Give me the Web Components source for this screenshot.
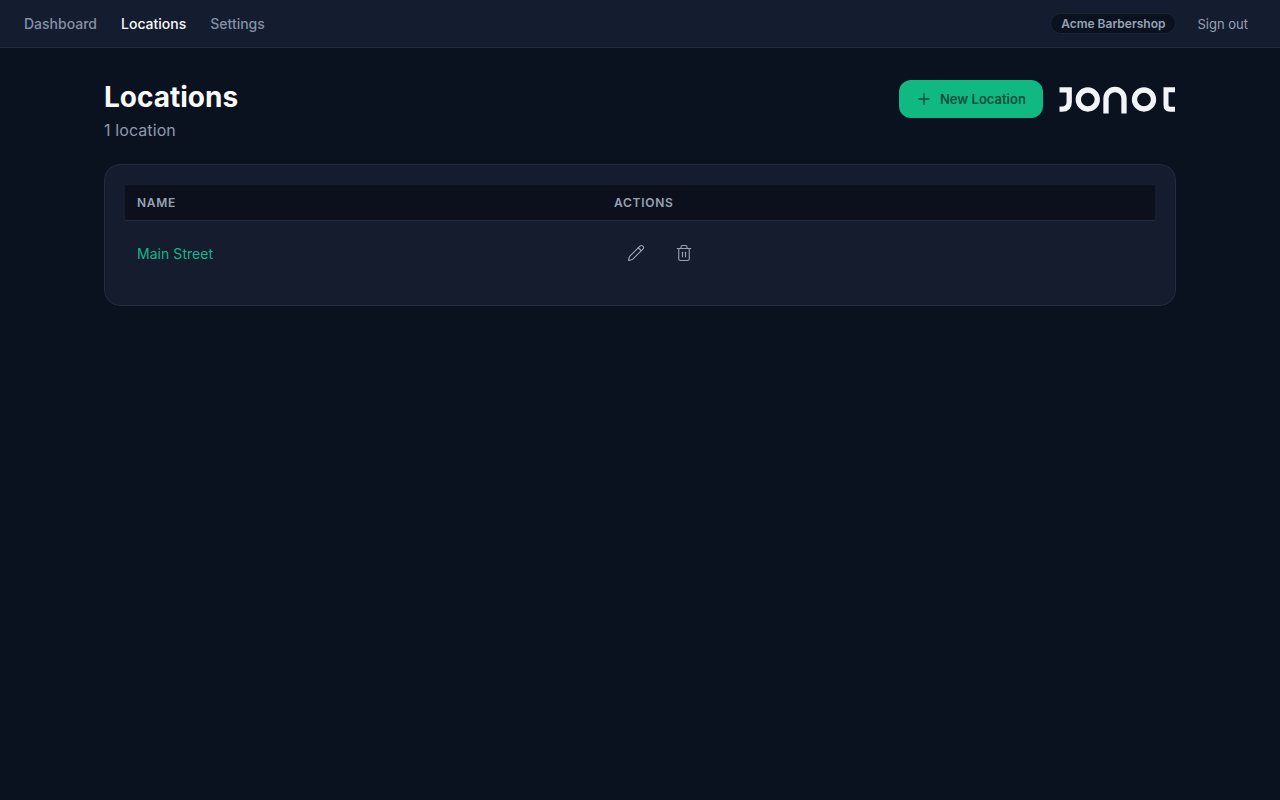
<!DOCTYPE html>
<html lang="en"><head><meta charset="utf-8"><title>Locations</title>
<style>
html,body{margin:0;padding:0;background:#0a1220;height:100%}
body{font-family:Inter,"Liberation Sans",sans-serif;color:#f1f5f9}
</style></head><body>
<app-nav></app-nav>
<page-main>
  <page-head title="Locations" sub="1 location">
    <new-button>New Location</new-button>
    <brand-logo></brand-logo>
  </page-head>
  <location-table></location-table>
</page-main>
<script>
function def(name,html,setup){
  customElements.define(name,class extends HTMLElement{
    constructor(){super();this.attachShadow({mode:'open'}).innerHTML=html;}
    connectedCallback(){if(setup)setup(this);}
  });
}
def('app-nav',`<style>
:host{display:flex;box-sizing:border-box;height:48px;align-items:center;justify-content:space-between;padding:0 32px 0 24px;background:#141c2f;border-bottom:1px solid #232c3e;font-size:14px;font-weight:500;color:#8491a5}
nav{display:flex;gap:24px}
a{color:inherit;text-decoration:none}
a.on{color:#f8fafc}
.r{display:flex;align-items:center;gap:21px}
.pill{box-sizing:border-box;height:21px;display:flex;align-items:center;padding:0 10px;border-radius:11px;background:#0a1220;border:1px solid #1c2536;font-size:12px;font-weight:600;color:#98a2b3}
.out{color:#98a2b3;font-weight:400;font-size:13px}
</style><nav><a href="#">Dashboard</a><a href="#" class="on">Locations</a><a href="#">Settings</a></nav>
<div class="r"><span class="pill">Acme Barbershop</span><a href="#" class="out">Sign out</a></div>`);
def('page-main',`<style>:host{display:block;width:1072px;margin:0 auto;padding-top:32px}</style><slot></slot>`);
def('page-head',`<style>
:host{display:flex;justify-content:space-between;align-items:flex-start;margin-bottom:22px}
h1{margin:0;font-size:28px;line-height:34px;font-weight:700;color:#f8fafc}
p{margin:4px 0 0;font-size:16px;line-height:24px;letter-spacing:.1px;color:#8e9aad}
.a{display:flex;align-items:center;gap:16px}
</style><div><h1></h1><p></p></div><div class="a"><slot></slot></div>`,el=>{
  el.shadowRoot.querySelector('h1').textContent=el.getAttribute('title');
  el.shadowRoot.querySelector('p').textContent=el.getAttribute('sub');
});
def('new-button',`<style>
:host{display:flex;box-sizing:border-box;height:38px;width:144px;align-items:center;gap:9px;padding-left:18px;border-radius:12px;background:#10b981;color:#064e3b;font-size:13px;font-weight:600}
svg{width:14px;height:14px;flex:none}
</style><svg viewBox="0 0 14 14" fill="none" stroke="#064e3b" stroke-width="1.4" stroke-linecap="round"><path d="M7 1.800v10.400M1.800 7h10.400"/></svg><slot></slot>`);
def('brand-logo',`<style>:host{display:block;width:117px;height:38px}svg{display:block}</style>
<svg width="117" height="38" viewBox="0 0 117 38" fill="none" stroke="#f1f5f9" stroke-width="5.300">
<path d="M0.500 9.900H10.200V22Q10.200 29.100 3 29.100H0.500"/>
<circle cx="28.800" cy="19.500" r="9.500"/>
<path d="M47 33.500V18.500A9 9 0 0 1 65 18.500V33.500"/>
<circle cx="85" cy="19.500" r="9.500"/>
<path d="M116 9.700H107V25Q107 29.300 111 29.300H116" stroke-width="5"/>
</svg>`);
const pencil=`<svg viewBox="0 0 24 24" fill="none" stroke="currentColor" stroke-width="1.500" stroke-linecap="round" stroke-linejoin="round"><path d="M21.174 6.812a1 1 0 0 0-3.986-3.987L3.842 16.174a2 2 0 0 0-.5.83l-1.321 4.352a.5.5 0 0 0 .623.622l4.353-1.32a2 2 0 0 0 .83-.497z"/><path d="m15 5 4 4"/></svg>`;
const trash=`<svg viewBox="0 0 24 24" fill="none" stroke="currentColor" stroke-width="1.500" stroke-linecap="round" stroke-linejoin="round"><path d="M3 6h18"/><path d="M19 6v14c0 1-1 2-2 2H7c-1 0-2-1-2-2V6"/><path d="M8 6V4c0-1 1-2 2-2h4c1 0 2 1 2 2v2"/><path d="M10 11v6"/><path d="M14 11v6"/></svg>`;
def('icon-btn',`<style>
:host{display:flex;width:44px;height:44px;align-items:center;justify-content:center;color:#98a2b3}
svg{width:18px;height:18px;display:block}
</style><slot></slot>`,el=>{
  el.shadowRoot.innerHTML=el.shadowRoot.innerHTML.replace('<slot></slot>',el.getAttribute('icon')==='pencil'?pencil:trash);
});
def('location-table',`<style>
:host{display:block;box-sizing:border-box;height:142px;padding:20px;background:#141c2e;border:1px solid #232c3e;border-radius:16px}
.row{display:grid;grid-template-columns:477px 1fr}
.head{height:36px;box-sizing:border-box;background:#0b101c;border-bottom:1px solid #232c3e;align-items:center;font-size:12px;font-weight:600;letter-spacing:.72px;color:#98a2b3}
.head span{padding-left:12px}
.body{height:64px;align-items:center;font-size:14px}
.body a{padding-left:12px;color:#17b68a;text-decoration:none;letter-spacing:.05px;padding-top:1px}
.acts{display:flex;gap:4px;padding-left:12px}
</style>
<div class="row head"><span>NAME</span><span>ACTIONS</span></div>
<div class="row body"><a href="#">Main Street</a><div class="acts"><icon-btn icon="pencil"></icon-btn><icon-btn icon="trash"></icon-btn></div></div>`);
</script>
</body></html>
